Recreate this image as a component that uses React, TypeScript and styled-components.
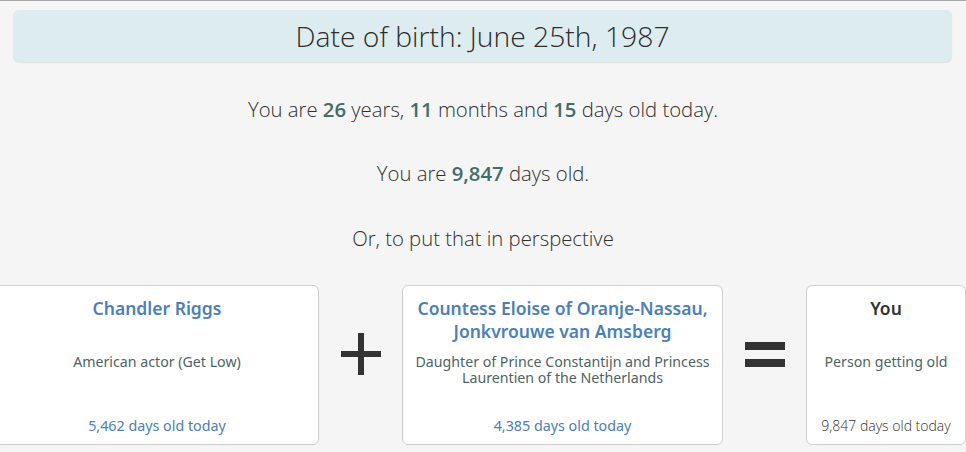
import React from 'react';
import styled, { createGlobalStyle } from 'styled-components';

const GlobalStyle = createGlobalStyle`
  html, body {
    margin: 0;
    padding: 0;
    background: #f5f5f5;
    overflow: hidden;
  }
  body {
    border-top: 1px solid #a9a9a9;
    font-family: 'Open Sans', 'Liberation Sans', sans-serif;
    color: #333;
  }
`;

const Page = styled.div`
  width: 966px;
  height: 451px;
  display: flex;
  flex-direction: column;
`;

const DateHeader = styled.h1`
  margin: 9px 14px 0 13px;
  height: 52px;
  display: flex;
  align-items: center;
  justify-content: center;
  background: #ddecee;
  border-radius: 6px;
  box-shadow: 0 1px 1px rgba(0, 0, 0, 0.08);
  font-family: 'Open Sans', sans-serif;
  font-weight: 300;
  font-size: 28.3px;
  color: #2d2d2d;
`;

const Statement = styled.p<{ $gap: number }>`
  margin: ${({ $gap }) => $gap}px 0 0;
  height: 28px;
  line-height: 28px;
  text-align: center;
  font-family: 'Open Sans', sans-serif;
  font-weight: 300;
  font-size: 20.3px;
  color: #2f2f2f;
`;

const Num = styled.strong`
  font-weight: 600;
  color: #3f6e6c;
`;

const Comparison = styled.div`
  margin-top: 33px;
  display: flex;
  align-items: stretch;
  margin-left: -5px;
`;

const Card = styled.div<{ $width: number }>`
  width: ${({ $width }) => $width}px;
  height: 160px;
  box-sizing: border-box;
  flex-shrink: 0;
  background: #fff;
  border: 1px solid #cfcfcf;
  border-radius: 6px;
  display: flex;
  flex-direction: column;
  align-items: center;
  padding: 11px 8px 8px;
  text-align: center;
  font-family: 'Noto Sans', 'Open Sans', sans-serif;
`;

const Name = styled.div<{ $self?: boolean }>`
  min-height: 57px;
  font-size: 17.5px;
  line-height: 23px;
  font-weight: 600;
  color: ${({ $self }) => ($self ? '#333' : '#4a80bd')};
`;

const Role = styled.div`
  flex: 1;
  font-size: 14.2px;
  line-height: 16px;
  color: #4d6464;
`;

const Age = styled.div<{ $self?: boolean }>`
  font-size: ${({ $self }) => ($self ? 14 : 14.3)}px;
  line-height: 20px;
  color: ${({ $self }) => ($self ? '#333' : '#4a80bd')};
  font-family: ${({ $self }) =>
    $self ? "'Open Sans', sans-serif" : "'Noto Sans', 'Open Sans', sans-serif"};
  font-weight: ${({ $self }) => ($self ? 300 : 400)};
`;

const Operator = styled.div<{ $offset: number }>`
  width: 83px;
  flex-shrink: 0;
  display: flex;
  align-items: flex-start;
  justify-content: center;
  padding-top: ${({ $offset }) => $offset}px;
  box-sizing: border-box;
`;

const PlusSign = styled.span`
  position: relative;
  width: 40px;
  height: 42px;
  &::before,
  &::after {
    content: '';
    position: absolute;
    background: #333;
  }
  &::before {
    left: 0;
    right: 0;
    top: 18px;
    height: 6px;
  }
  &::after {
    top: 0;
    bottom: 0;
    left: 17px;
    width: 6px;
  }
`;

const EqualsSign = styled.span`
  width: 40px;
  height: 25px;
  box-sizing: border-box;
  border-top: 8px solid #333;
  border-bottom: 8px solid #333;
`;

interface Person {
  name: string;
  role: string;
  days: string;
  width: number;
  self?: boolean;
}

const people: Person[] = [
  {
    name: 'Chandler Riggs',
    role: 'American actor (Get Low)',
    days: '5,462',
    width: 324,
  },
  {
    name: 'Countess Eloise of Oranje-Nassau, Jonkvrouwe van Amsberg',
    role: 'Daughter of Prince Constantijn and Princess Laurentien of the Netherlands',
    days: '4,385',
    width: 321,
  },
  {
    name: 'You',
    role: 'Person getting old',
    days: '9,847',
    width: 160,
    self: true,
  },
];

const PersonCard: React.FC<{ person: Person }> = ({ person }) => (
  <Card $width={person.width}>
    <Name $self={person.self}>{person.name}</Name>
    <Role>{person.role}</Role>
    <Age $self={person.self}>{person.days} days old today</Age>
  </Card>
);

const App: React.FC = () => (
  <>
    <GlobalStyle />
    <Page>
      <DateHeader>Date of birth: June 25th, 1987</DateHeader>
      <Statement $gap={33}>
        You are <Num>26</Num> years, <Num>11</Num> months and <Num>15</Num> days
        old today.
      </Statement>
      <Statement $gap={36}>
        You are <Num>9,847</Num> days old.
      </Statement>
      <Statement $gap={37}>Or, to put that in perspective</Statement>
      <Comparison>
        <PersonCard person={people[0]} />
        <Operator $offset={48}>
          <PlusSign />
        </Operator>
        <PersonCard person={people[1]} />
        <Operator $offset={57}>
          <EqualsSign />
        </Operator>
        <PersonCard person={people[2]} />
      </Comparison>
    </Page>
  </>
);

export default App;
